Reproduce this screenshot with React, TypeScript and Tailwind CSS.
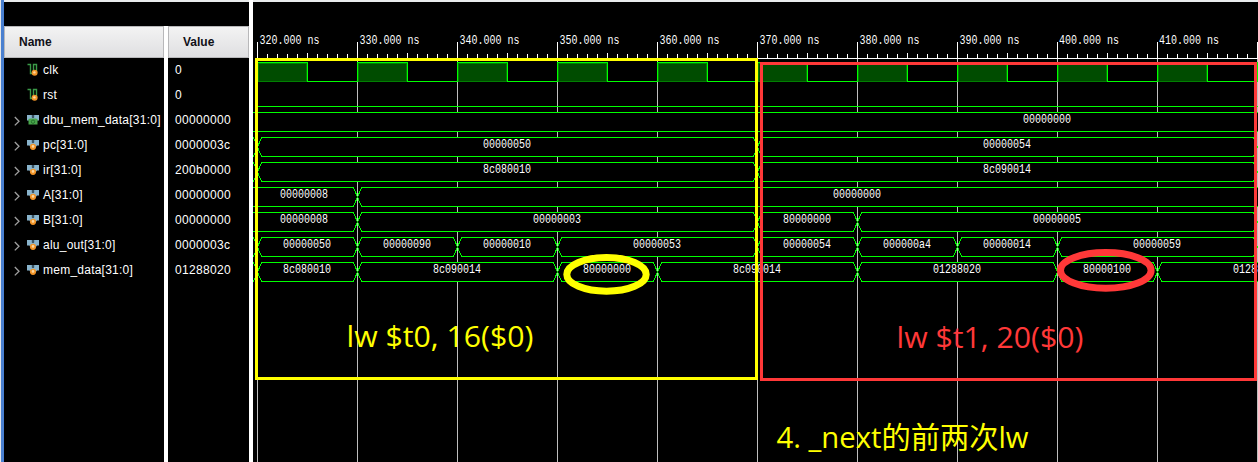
import React from "react";

type Segment = { from: number; to: number; label?: string; at?: number };
type Signal = {
  name: string;
  value: string;
  kind: "clock" | "low" | "bus";
  green?: boolean;
  segments?: Segment[];
};

const signals: Signal[] = [
  { name: "clk", value: "0", kind: "clock" },
  { name: "rst", value: "0", kind: "low" },
  {
    name: "dbu_mem_data[31:0]", value: "00000000", kind: "bus", green: true,
    segments: [{ from: 200, to: 1400, label: "00000000", at: 1047 }],
  },
  {
    name: "pc[31:0]", value: "0000003c", kind: "bus",
    segments: [
      { from: 157, to: 257 },
      { from: 257, to: 757, label: "00000050" },
      { from: 757, to: 1257, label: "00000054", at: 1007 },
      { from: 1257, to: 1400 },
    ],
  },
  {
    name: "ir[31:0]", value: "200b0000", kind: "bus",
    segments: [
      { from: 157, to: 257 },
      { from: 257, to: 757, label: "8c080010" },
      { from: 757, to: 1257, label: "8c090014" },
      { from: 1257, to: 1400 },
    ],
  },
  {
    name: "A[31:0]", value: "00000000", kind: "bus",
    segments: [
      { from: 157, to: 357, label: "00000008", at: 304 },
      { from: 357, to: 1400, label: "00000000", at: 857 },
    ],
  },
  {
    name: "B[31:0]", value: "00000000", kind: "bus",
    segments: [
      { from: 157, to: 357, label: "00000008", at: 304 },
      { from: 357, to: 757, label: "00000003" },
      { from: 757, to: 857, label: "80000000" },
      { from: 857, to: 1257, label: "00000005" },
      { from: 1257, to: 1400 },
    ],
  },
  {
    name: "alu_out[31:0]", value: "0000003c", kind: "bus",
    segments: [
      { from: 157, to: 257 },
      { from: 257, to: 357, label: "00000050" },
      { from: 357, to: 457, label: "00000090" },
      { from: 457, to: 557, label: "00000010" },
      { from: 557, to: 757, label: "00000053" },
      { from: 757, to: 857, label: "00000054" },
      { from: 857, to: 957, label: "000000a4" },
      { from: 957, to: 1057, label: "00000014" },
      { from: 1057, to: 1257, label: "00000059" },
      { from: 1257, to: 1400 },
    ],
  },
  {
    name: "mem_data[31:0]", value: "01288020", kind: "bus",
    segments: [
      { from: 157, to: 257 },
      { from: 257, to: 357, label: "8c080010" },
      { from: 357, to: 557, label: "8c090014" },
      { from: 557, to: 657, label: "80000000" },
      { from: 657, to: 857, label: "8c090014" },
      { from: 857, to: 1057, label: "01288020" },
      { from: 1057, to: 1157, label: "80000100" },
      { from: 1157, to: 1400, label: "01288020", at: 1257 },
    ],
  },
];

const majors = Array.from({ length: 11 }, (_, i) => 257 + i * 100);

function ScalarIcon() {
  return (
    <svg className="h-4 w-3 shrink-0" viewBox="0 0 12 16">
      <path d="M0.5 2.5H3.5V11.5H6.5V2.5H9.5V11" fill="none" stroke="#3a9a48" strokeWidth="1.4" />
      <circle cx="7.6" cy="10.8" r="3" fill="#f09428" />
      <circle cx="7.4" cy="10.4" r="1.2" fill="#ffd9a0" />
    </svg>
  );
}

function BusIcon({ green }: { green?: boolean }) {
  return (
    <svg className="h-4 w-3 shrink-0" viewBox="0 0 12 16">
      <path d="M0 3H5V5.5H7V3H12V8.5H10L8 11H4L2.5 8.5H0Z" fill="#89b4cc" />
      <path d="M4.8 3H7.2V5.5H4.8Z" fill="#3b5564" />
      {green ? (
        <>
          <path d="M1.5 7L3.5 6.5H8.5L10.5 7V12.5H1.5Z" fill="#49a54b" />
          <circle cx="6" cy="9.7" r="1.7" fill="none" stroke="#24702c" strokeWidth="1" />
        </>
      ) : (
        <>
          <circle cx="6" cy="9.8" r="3.1" fill="#f09428" />
          <circle cx="6" cy="9.4" r="1.3" fill="#ffd9a0" />
        </>
      )}
    </svg>
  );
}

function WaveText({ x, y, anchor, children }: { x: number; y: number; anchor: "start" | "middle"; children: string }) {
  return (
    <text
      transform={`translate(${x} ${y}) scale(0.8333 1)`}
      textAnchor={anchor}
      fill="#ffffff"
      className="font-['Liberation_Mono',monospace] text-[12px]"
    >
      {children}
    </text>
  );
}

function Bus({ top, segments }: { top: number; segments: Segment[] }) {
  const t = top + 0.5;
  const b = top + 19.5;
  const m = top + 10;
  return (
    <g>
      {segments.map(({ from, to, label, at }) => (
        <g key={from}>
          <path
            d={`M${from + 0.5} ${m}L${from + 4.5} ${t}H${to - 3.5}L${to + 0.5} ${m}L${to - 3.5} ${b}H${from + 4.5}Z`}
            fill="#000000"
            stroke="#00ff00"
            shapeRendering="crispEdges"
          />
          {label && (
            <WaveText x={at ?? (from + to) / 2} y={top + 11} anchor="middle">{label}</WaveText>
          )}
        </g>
      ))}
    </g>
  );
}

function Clock() {
  return (
    <g shapeRendering="crispEdges">
      {majors.map((x) => (
        <g key={x}>
          <rect x={x} y={62} width={50} height={20} fill="#008000" />
          <rect x={x + 2} y={64} width={47} height={17} fill="#004c00" />
          <path d={`M${x + 0.5} 82V62.5H${x + 50.5}V81.5H${x + 100}`} fill="none" stroke="#00ff00" />
        </g>
      ))}
    </g>
  );
}

function Waveform() {
  return (
    <svg width="1005" height="462" viewBox="253 0 1005 462" className="block shrink-0 bg-black">
      <rect x={253} y={0} width={1005} height={2} fill="#e9ebec" />
      <g shapeRendering="crispEdges">
        {majors.map((x) => (
          <g key={x}>
            <rect x={x} y={59} width={1} height={403} fill="#bebebe" />
            <rect x={x} y={42} width={1} height={17} fill="#ffffff" />
            {[1, 2, 3, 4, 5, 6, 7, 8, 9].map((i) => (
              <rect key={i} x={x + i * 10} y={i === 5 ? 53 : 54} width={1} height={5} fill="#ffffff" />
            ))}
          </g>
        ))}
        <rect x={257} y={58} width={1001} height={1} fill="#ffffff" />
      </g>
      {majors.slice(0, 10).map((x, i) => (
        <WaveText key={x} x={i < 8 ? x + 2.6 : x + 2} y={44} anchor="start">{`${320 + i * 10}.000 ns`}</WaveText>
      ))}
      <Clock />
      <rect x={257} y={106} width={1001} height={1} fill="#00ff00" />
      {signals.map((s, i) =>
        s.segments ? <Bus key={s.name} top={62 + i * 25} segments={s.segments} /> : null
      )}
      <g fill="none" strokeWidth="3">
        <rect x={256.5} y={59.5} width={500} height={319} stroke="#ffff00" />
        <rect x={761.5} y={63.5} width={494} height={316} stroke="#ff3838" />
      </g>
      <g fill="none" strokeWidth="7">
        <ellipse cx={606.5} cy={274.4} rx={39.7} ry={16.8} stroke="#ffff00" />
        <ellipse cx={1105.8} cy={270.4} rx={45.3} ry={17.8} stroke="#ff3838" />
      </g>
      <g className="font-['Open_Sans','Noto_Sans_CJK_SC',sans-serif] text-[29.3px]">
        <text x={346.5} y={347} textLength={187} lengthAdjust="spacingAndGlyphs" fill="#ffff00">lw $t0, 16($0)</text>
        <text x={896.5} y={348} textLength={187} lengthAdjust="spacingAndGlyphs" fill="#ff3838">lw $t1, 20($0)</text>
        <text x={776.5} y={448} textLength={252} lengthAdjust="spacingAndGlyphs" fill="#ffff00">4. _next的前两次lw</text>
      </g>
    </svg>
  );
}

const headerClass =
  "flex h-8 items-center border border-[#b8b8ba] bg-linear-to-b from-[#f3f3f3] to-[#dfdfe1] text-[12px] font-bold text-[#101018]";

export default function App() {
  return (
    <div className="flex h-[462px] w-[1258px] overflow-hidden bg-black font-['Liberation_Sans',sans-serif] text-[12px] text-white">
      <div className="w-px shrink-0 bg-[#e8e8e8]" />
      <div className="w-[3px] shrink-0 bg-[#4a80d0]" />
      <div className="flex w-[245px] shrink-0 flex-col">
        <div className="h-0.5 bg-[#e9ebec]" />
        <div className="h-6" />
        <div className="flex grow">
          <div className="w-40">
            <div className={`${headerClass} pl-3.5`}>Name</div>
            {signals.map((s) => (
              <div key={s.name} className="flex h-[25px] items-center whitespace-nowrap pb-0.5 pl-2.5">
                <svg className="mr-[7px] mt-0.5 h-3 w-1.5 shrink-0" viewBox="0 0 6 12">
                  {s.kind === "bus" && <path d="M0.8 2L5 6.2L0.8 10.4" fill="none" stroke="#a0a0a0" strokeWidth="1.3" />}
                </svg>
                {s.kind === "bus" ? <BusIcon green={s.green} /> : <ScalarIcon />}
                <span className="ml-1 tracking-[0.24px]">{s.name}</span>
              </div>
            ))}
          </div>
          <div className="w-1 bg-white" />
          <div className="w-[81px]">
            <div className={`${headerClass} pl-3.5`}>Value</div>
            {signals.map((s) => (
              <div key={s.name} className="flex h-[25px] items-center pb-0.5 pl-[7px] tracking-[0.33px]">{s.value}</div>
            ))}
          </div>
        </div>
      </div>
      <div className="w-1 shrink-0 bg-white" />
      <Waveform />
    </div>
  );
}
